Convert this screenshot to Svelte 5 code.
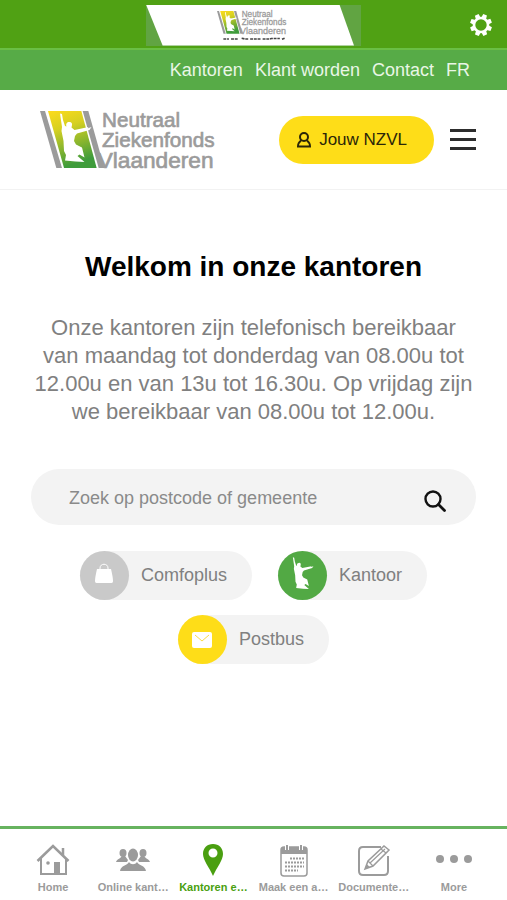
<script>
  const links = ['Kantoren', 'Klant worden', 'Contact', 'FR'];

  const filters = [
    { name: 'Comfoplus', color: 'grey' },
    { name: 'Kantoor', color: 'green' },
    { name: 'Postbus', color: 'yellow' }
  ];

  const tabs = [
    { icon: 'home', label: 'Home' },
    { icon: 'people', label: 'Online kant…' },
    { icon: 'pin', label: 'Kantoren e…', active: true },
    { icon: 'calendar', label: 'Maak een a…' },
    { icon: 'edit', label: 'Documente…' },
    { icon: 'more', label: 'More' }
  ];

  // the jumping figure, used in the logo and in the Kantoor filter
  const figure = 'M2 1 L6 2 L8 14 L12 26 L15 27 C13 22 16 18 20 18 C24 17 27 20 26 24 L25 29 L31 34 L59 28 L57 31 L65 28 L61 34 L36 41 L32 46 L30 56 L34 63 L46 69 L51 89 L41 83 L37 86 L51 98 L33 97 L12 95 L14 84 L10 76 L9 56 L5 36 L6 28 Z';

  let query = '';
</script>

{#snippet logo()}
  <defs>
    <linearGradient id="panel" x1="0" y1="0" x2="0.3" y2="1">
      <stop offset="0" stop-color="#fddb1c" />
      <stop offset="0.35" stop-color="#d6d021" />
      <stop offset="1" stop-color="#3f9c3b" />
    </linearGradient>
  </defs>
  <path d="M0 0H15L66 171H49Z" fill="#9b9b9b" />
  <path d="M24 0H124L170 171H72Z" fill="url(#panel)" />
  <path d="M128 0H145L193 171H176Z" fill="#9b9b9b" />
  <path d={figure} transform="translate(57 6) scale(1.5)" fill="#fff" />
  <g class="logo-text">
    <text x="186" y="48">Neutraal</text>
    <text x="186" y="109">Ziekenfonds</text>
    <text class="wide" x="173" y="170">Vlaanderen</text>
  </g>
{/snippet}

<div class="page">
  <div class="appbar">
    <div class="banner">
      <div class="banner-inner">
        <svg class="banner-logo" viewBox="0 0 528 226" aria-label="Neutraal Ziekenfonds Vlaanderen">
          {@render logo()}
          <path d="M48 211H90M106 211H158M186 205L212 211H236M250 211H328M344 211H400L410 207H474M490 213L510 205" stroke="#444" stroke-width="12" stroke-dasharray="22 6" fill="none" />
        </svg>
      </div>
    </div>
    <button class="settings" aria-label="Instellingen">
      <svg viewBox="0 0 24 24" width="24" height="24">
        <g fill="#fff">
          {#each [22, 67, 112, 157, 202, 247, 292, 337] as angle}
            <path d="M9.500 5L10 1H14L14.500 5Z" transform="rotate({angle} 12 12)" />
          {/each}
        </g>
        <circle cx="12" cy="12" r="7" fill="none" stroke="#fff" stroke-width="2.600" />
      </svg>
    </button>
  </div>

  <nav class="topnav">
    {#each links as link}
      <a href="/">{link}</a>
    {/each}
  </nav>

  <header>
    <a class="logo" href="/" aria-label="Neutraal Ziekenfonds Vlaanderen">
      <svg viewBox="0 0 528 174" width="176" height="58">{@render logo()}</svg>
    </a>
    <a class="account" href="/">
      <svg viewBox="0 0 14 16" width="14" height="16" fill="none" stroke="#2b2608" stroke-width="2">
        <circle cx="7" cy="5" r="4" />
        <path d="M4 8.500C2 10 1 11 1 14.500H13C13 11 12 10 10 8.500" />
      </svg>
      Jouw NZVL
    </a>
    <button class="menu" aria-label="Menu">
      <span></span><span></span><span></span>
    </button>
  </header>

  <main>
    <h1>Welkom in onze kantoren</h1>
    <p>Onze kantoren zijn telefonisch bereikbaar van maandag tot donderdag van 08.00u tot 12.00u en van 13u tot 16.30u. Op vrijdag zijn we bereikbaar van 08.00u tot 12.00u.</p>

    <form class="search">
      <input type="text" bind:value={query} placeholder="Zoek op postcode of gemeente" aria-label="Zoek op postcode of gemeente" />
      <button aria-label="Zoeken">
        <svg viewBox="0 0 22 22" width="22" height="22" fill="none" stroke="#111" stroke-linecap="round">
          <circle cx="9" cy="9" r="7.500" stroke-width="2.400" />
          <path d="M14.500 14.500L20.500 20.500" stroke-width="2.800" />
        </svg>
      </button>
    </form>

    <div class="filters">
      {#each filters as filter}
        <button class="filter">
          <span class="dot {filter.color}">
            {#if filter.color === 'grey'}
              <svg class="bag" viewBox="0 0 18 20" width="18" height="20">
                <path d="M5 9V5C5 0 13 0 13 5V9" fill="none" stroke="#fff" stroke-width="1" />
                <path d="M2 6H16C17 10 18 15 18 18C18 19 17.500 20 16.500 20H1.500C0.500 20 0 19 0 18C0 15 1 10 2 6Z" fill="#fff" />
              </svg>
            {:else if filter.color === 'green'}
              <svg class="jumper" viewBox="0 0 66 98" width="22" height="32"><path d={figure} fill="#fff" /></svg>
            {:else}
              <svg viewBox="0 0 20 16" width="20" height="16">
                <rect width="20" height="16" rx="2" fill="#fff" />
                <path d="M3 3L10 9L17 3" fill="none" stroke="#fadc45" stroke-width="1" />
              </svg>
            {/if}
          </span>
          {filter.name}
        </button>
      {/each}
    </div>
  </main>

  <nav class="tabs">
    {#each tabs as tab}
      <a href="/" class:active={tab.active}>
        <svg viewBox="0 0 36 36" width="36" height="36" fill="none" stroke="currentColor">
          {#if tab.icon === 'home'}
            <path d="M2.500 19L18 4L33.500 19" stroke-width="2.500" />
            <path d="M6 16V32H31V16" stroke-width="2" />
            <path d="M28 6V13" stroke-width="2.500" />
            <path d="M19 20H25V32H19Z" fill="currentColor" stroke="none" />
            <circle cx="13" cy="21" r="1.800" fill="currentColor" stroke="none" />
          {:else if tab.icon === 'people'}
            <g fill="currentColor" stroke="none">
              <ellipse cx="8" cy="11" rx="3.500" ry="4" />
              <ellipse cx="28" cy="11" rx="3.500" ry="4" />
              <path d="M1 20C2 17 5 17 7 14H10L13 18L12 20Z" />
              <path d="M35 20C34 17 31 17 29 14H26L23 18L24 20Z" />
              <ellipse cx="18" cy="13" rx="5" ry="6.500" />
              <path d="M5 29C6 23 12 24 14 20C16 23 20 23 22 20C24 24 30 23 31 29Z" />
            </g>
          {:else if tab.icon === 'pin'}
            <path fill="currentColor" stroke="none" fill-rule="evenodd" d="M18 2C12 2 8 6 8 12C8 18 14 25 18 34C22 25 28 18 28 12C28 6 24 2 18 2ZM18 6.500A4.500 4.500 0 1 1 18 15.500A4.500 4.500 0 1 1 18 6.500Z" />
          {:else if tab.icon === 'calendar'}
            <rect x="5" y="5" width="26" height="29" rx="3" stroke-width="1.500" />
            <path d="M5 12V8C5 6 6 5 8 5H28C30 5 31 6 31 8V12Z" fill="currentColor" stroke="none" />
            <path d="M11 2V8M25 2V8" stroke="#fff" stroke-width="4" />
            <path d="M11 3V8M25 3V8" stroke-width="2" />
            <path d="M14 16.500H28M9 20.500H28M9 24.500H28M9 28.500H22" stroke-width="2" stroke-dasharray="2 1" />
          {:else if tab.icon === 'edit'}
            <path d="M25 5H7C4 5 3 6 3 9V29C3 32 4 33 7 33H28C31 33 32 32 32 29V14" stroke-width="2" />
            <path d="M9 27L12 19L28 4L33 8L17 24Z" stroke-width="1.500" />
            <path d="M25 7L30 11M12 19L17 24M14 21L29 7" stroke-width="1.200" />
            <path d="M9 27L10.500 22L14 25Z" fill="currentColor" stroke="none" />
          {:else}
            <g fill="currentColor" stroke="none">
              <circle cx="4" cy="17" r="4" />
              <circle cx="18" cy="17" r="4" />
              <circle cx="32" cy="17" r="4" />
            </g>
          {/if}
        </svg>
        <span>{tab.label}</span>
      </a>
    {/each}
  </nav>
</div>

<style>
  :global(body) {
    margin: 0;
    background: #fff;
    font-family: 'Liberation Sans', Arial, sans-serif;
  }

  button {
    border: none;
    padding: 0;
    background: none;
    font-family: inherit;
    cursor: pointer;
  }

  a {
    color: inherit;
    text-decoration: none;
  }

  svg {
    display: block;
    flex-shrink: 0;
    overflow: visible;
  }

  .page {
    display: flex;
    flex-direction: column;
    min-height: 100vh;
  }

  .appbar {
    display: grid;
    grid-template-columns: 1fr auto 1fr;
    align-items: center;
    height: 48px;
    padding: 0 14px;
    background: #50a114;
    border-bottom: 2px solid #6abf45;
  }

  .banner {
    grid-column: 2;
    margin-top: 2px;
    background: #61a442;
  }

  .banner-inner {
    width: 208px;
    height: 41px;
    margin-right: 7px;
    box-sizing: border-box;
    padding-top: 6px;
    background: #fff;
    clip-path: polygon(0 0, 93% 0, 100% 100%, 8% 100%);
  }

  .banner-logo {
    width: 70px;
    height: 30px;
    margin-left: 71px;
  }

  .settings {
    justify-self: end;
    margin-top: 2px;
  }

  .logo-text {
    fill: #9b9b9b;
    stroke: #9b9b9b;
    stroke-width: 2px;
    font-family: 'Liberation Sans', Arial, sans-serif;
    font-size: 62px;
  }

  .wide {
    font-size: 68px;
  }

  .topnav {
    display: flex;
    justify-content: flex-end;
    align-items: center;
    gap: 12px;
    height: 40px;
    padding: 0 37px;
    background: #57ab47;
    color: #e9f6e6;
    font-size: 18px;
  }

  header {
    display: flex;
    align-items: center;
    height: 99px;
    padding: 0 31px 0 40px;
    border-bottom: 1px solid #f2f2f2;
  }

  .logo {
    margin-right: auto;
  }

  .account {
    display: flex;
    align-items: center;
    gap: 8px;
    height: 48px;
    padding: 0 27px 0 18px;
    border-radius: 24px;
    background: #fedd18;
    color: #2b2608;
    font-size: 17px;
  }

  .menu {
    display: flex;
    flex-direction: column;
    gap: 6px;
    width: 26px;
    margin-left: 16px;
  }

  .menu span {
    height: 3px;
    background: #2d2d2d;
  }

  main {
    flex: 1;
    padding: 60px 31px;
    text-align: center;
  }

  h1 {
    margin: 0 0 30px;
    color: #000;
    font-size: 28px;
    line-height: 34px;
  }

  p {
    margin: 0 0 43px;
    color: #808080;
    font-size: 22px;
    line-height: 28px;
  }

  .search {
    display: flex;
    align-items: center;
    height: 56px;
    padding: 0 30px 0 38px;
    border-radius: 28px;
    background: #f3f3f3;
  }

  .search input {
    flex: 1;
    min-width: 0;
    padding: 2px 0 0;
    border: none;
    outline: none;
    background: none;
    color: #444;
    font-family: inherit;
    font-size: 18px;
  }

  .search input::placeholder {
    color: #8a8a8a;
    opacity: 1;
  }

  .search button {
    margin-top: 8px;
  }

  .filters {
    display: flex;
    flex-wrap: wrap;
    justify-content: center;
    gap: 15px 26px;
    margin-top: 26px;
  }

  .filter {
    display: flex;
    align-items: center;
    gap: 12px;
    padding-right: 25px;
    border-radius: 25px;
    background: #f3f3f3;
    color: #808080;
    font-size: 18px;
  }

  .dot {
    display: flex;
    align-items: center;
    justify-content: center;
    width: 49px;
    height: 49px;
    border-radius: 50%;
  }

  .bag,
  .jumper {
    margin-bottom: 6px;
  }

  .grey {
    background: #c9c9c9;
  }

  .green {
    background: #52a944;
  }

  .yellow {
    background: #fedd18;
  }

  .tabs {
    display: grid;
    grid-template-columns: repeat(6, 1fr);
    height: 71px;
    padding: 0 13px;
    border-top: 3px solid #67b35f;
    color: #9b9b9b;
  }

  .tabs a {
    display: flex;
    flex-direction: column;
    align-items: center;
    gap: 2px;
    padding-top: 13px;
    font-size: 11px;
    font-weight: bold;
    line-height: 14px;
    white-space: nowrap;
  }

  .tabs .active {
    color: #4a9f10;
  }
</style>
